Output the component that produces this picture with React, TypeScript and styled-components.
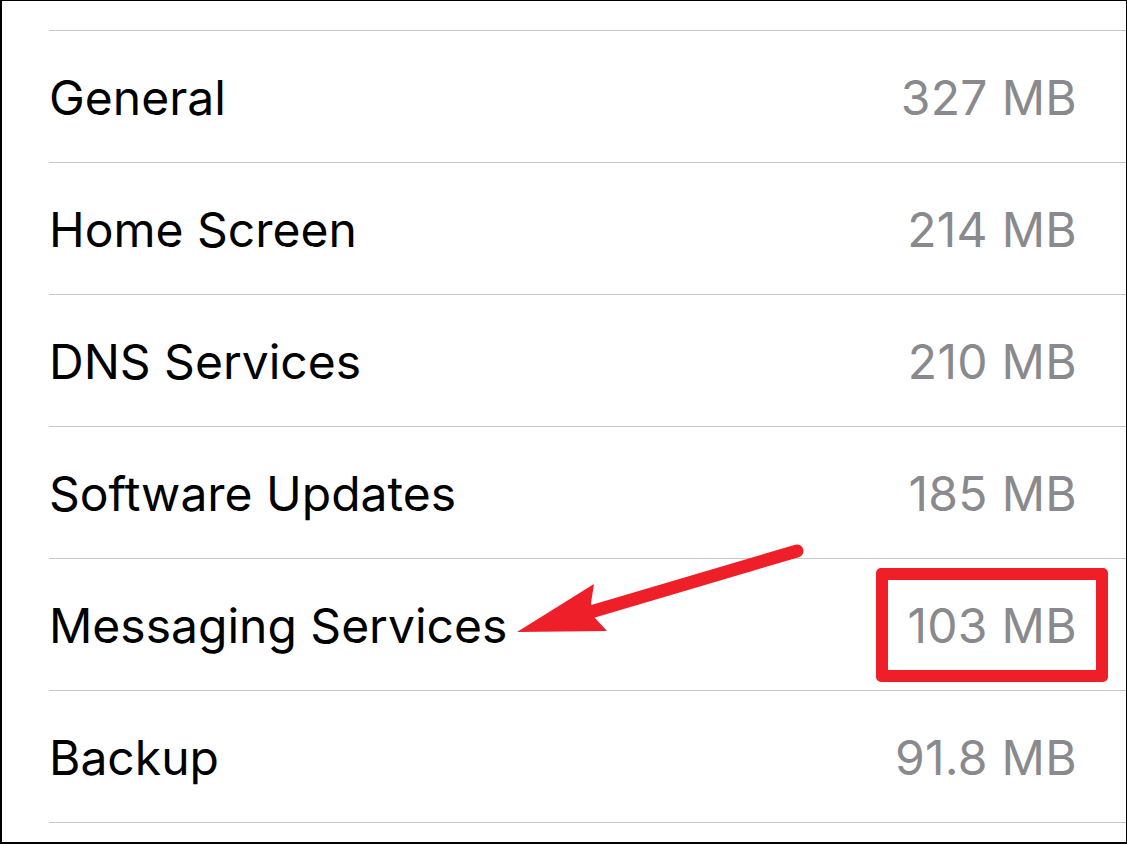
import React from "react";
import styled, { createGlobalStyle } from "styled-components";

const GlobalStyle = createGlobalStyle`
  html, body { margin: 0; padding: 0; background: #fff; }
  * { box-sizing: border-box; }
`;

const Frame = styled.div`
  position: relative;
  width: 1127px;
  height: 844px;
  overflow: hidden;
  background: #fff;
  border-style: solid;
  border-color: #000;
  border-width: 1px 1px 2px 2px;
  padding-top: 29px;
  font-family: Inter, "Liberation Sans", Arial, sans-serif;
`;

const List = styled.div`
  margin-left: 47px;
  border-top: 1px solid #c8c7cc;
  display: flex;
  flex-direction: column;
`;

const Row = styled.div`
  height: 132px;
  display: flex;
  align-items: center;
  justify-content: space-between;
  padding-right: 49px;
  padding-top: 2px;
  border-bottom: 1px solid #c8c7cc;
`;

const Label = styled.span`
  font-size: 48px;
  color: #000;
  letter-spacing: 0;
`;

const Value = styled.span`
  font-size: 48px;
  color: #8a8a8e;
  letter-spacing: 0.3px;
`;

const Highlight = styled.div`
  position: absolute;
  left: 874px;
  top: 567px;
  width: 232px;
  height: 114px;
  border: 12px solid #ee1f29;
  border-radius: 5px;
  pointer-events: none;
`;

const Overlay = styled.svg`
  position: absolute;
  left: -2px;
  top: -1px;
  width: 1127px;
  height: 844px;
  pointer-events: none;
`;

const rows = [
  { label: "General", value: "327 MB" },
  { label: "Home Screen", value: "214 MB" },
  { label: "DNS Services", value: "210 MB" },
  { label: "Software Updates", value: "185 MB" },
  { label: "Messaging Services", value: "103 MB" },
  { label: "Backup", value: "91.8 MB" },
];

export default function App() {
  return (
    <>
      <GlobalStyle />
      <Frame>
        <List>
          {rows.map((r) => (
            <Row key={r.label}>
              <Label>{r.label}</Label>
              <Value>{r.value}</Value>
            </Row>
          ))}
        </List>
        <Highlight />
        <Overlay viewBox="0 0 1127 844">
          <line x1="594" y1="611" x2="797" y2="551" stroke="#ee1f29" strokeWidth="13" strokeLinecap="round" />
          <polygon points="517,632 594,584 591,603 595,618 607,631" fill="#ee1f29" />
        </Overlay>
      </Frame>
    </>
  );
}
